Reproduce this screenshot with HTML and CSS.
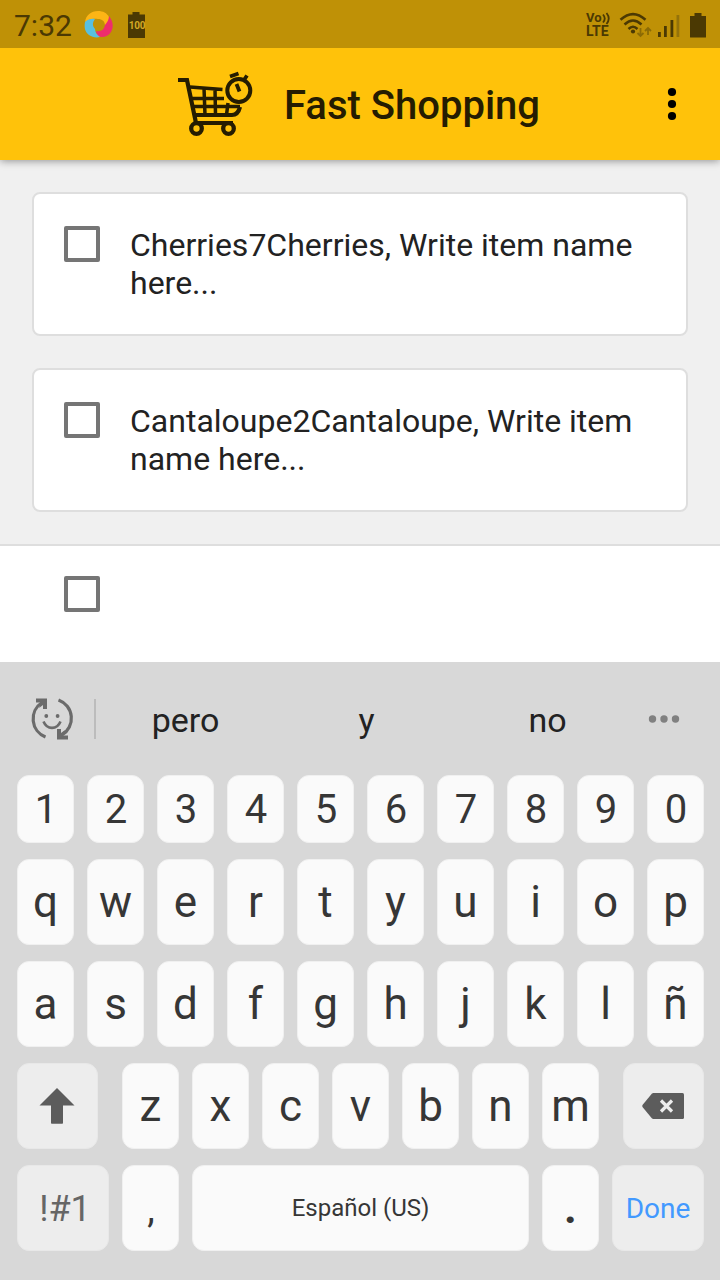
FILE: index.html
```html
<!DOCTYPE html>
<html lang="en">
<head>
<meta charset="utf-8">
<title>Fast Shopping</title>
<link rel="stylesheet" href="styles.css">
</head>
<body>
<div class="screen">
  <div class="status">
    <span class="clock">7:32</span>
    <svg class="swirl" width="30" height="30" viewBox="0 0 30 30">
      <path d="M1 12C2 5 7 1 14 1c5 0 9 2 11 6 0 4-1 6-4 9 0-5-3-7-7-7-4-1-9 0-13 3z" fill="#fdb515"/>
      <path d="M25 6c4 5 5 11 2 16-3 5-9 6-14 4l-1-5c5 1 8-1 9-6 2-3 4-5 4-9z" fill="#ee2d6b"/>
      <path d="M1 12c3-3 7-3.500 10-3-3 4-2.500 7 0 10 0 3 2 6 5 8-4 1-8 0-11-2C1 22 0 17.500 1 12z" fill="#58c0df"/>
    </svg>
    <span class="charge"><svg width="18" height="28" viewBox="0 0 18 28"><path d="M1 2.500h4.500V0h7v2.500H18V26H1z" fill="#4b3903"/></svg><b>100</b></span>
    <span class="volte"><span class="vo">Vo<svg width="9" height="13" viewBox="0 0 9 13" fill="none" stroke="#4b3903" stroke-width="1.800"><path d="M1 2.500q3.500 4 0 8M4.500 1q4.500 5.500 0 11"/></svg></span><span class="lte">LTE</span></span>
    <svg class="wifi" width="34" height="28" viewBox="0 0 34 28" fill="none" stroke="#4b3903" stroke-width="2.500">
      <path d="M1.500 7.800Q14-3.500 26.500 7.800M5.500 12.500Q14 4.500 22.500 12.500M9.500 17Q14 12.500 18.500 17"/>
      <circle cx="14" cy="19.500" r="2.100" fill="#4b3903" stroke="none"/>
      <path d="M21.500 16v8M18.500 21l3 3 3-3M29 23v-7M26 19l3-3 3 3" stroke="#8b6b05" stroke-width="1.800"/>
    </svg>
    <svg class="signal" width="22" height="24" viewBox="0 0 22 24" fill="#4b3903"><path d="M0 18h2.800v5H0zM6 12h2.800v11H6zM12.500 6h2.800v17h-2.800z"/><path d="M18.500 1h2.800v22h-2.800z" fill="#94720a"/></svg>
    <svg class="battery" width="16" height="25" viewBox="0 0 16 25"><path d="M0 3h4.500V0h7v3H16v21q0 .5-.5.500H.5Q0 24.500 0 24z" fill="#4b3903"/></svg>
  </div>
  <header class="bar">
    <svg class="cart" width="80" height="70" viewBox="0 0 80 70" fill="none" stroke="#251c01" stroke-width="3.500">
      <path d="M2 10H11L20 53H57" stroke-width="4.200"/>
      <path d="M14 17L46.500 19.500M16 28.500H48M18 36.500H64M28 18l1 27M39 19l.5 26M52 33l-1.500 12"/>
      <path d="M19 45H56Q62 45 64 37" stroke-width="4.200"/>
      <circle cx="20.500" cy="58.500" r="5.300" stroke-width="4.300"/>
      <circle cx="52.500" cy="58.500" r="5.300" stroke-width="4.300"/>
      <circle cx="62.800" cy="20.500" r="11.500" stroke-width="4"/>
      <path d="M60.500 14l3 7.500M54 6.500l8.500-3M68 10l3-4.500" stroke-width="3.800"/>
    </svg>
    <h1 class="title">Fast Shopping</h1>
    <svg class="more" width="10" height="34" viewBox="0 0 10 34"><circle cx="5" cy="5" r="4.100"/><circle cx="5" cy="17" r="4.100"/><circle cx="5" cy="29" r="4.100"/></svg>
  </header>
  <main class="list">
    <div class="card"><span class="check"></span><p class="item">Cherries7Cherries, Write item name here...</p></div>
    <div class="card"><span class="check"></span><p class="item">Cantaloupe2Cantaloupe, Write item name here...</p></div>
  </main>
  <div class="entry"><span class="check"></span></div>
  <div class="keyboard">
    <div class="suggest">
      <svg class="emoji" width="44" height="44" viewBox="0 0 44 44" fill="none" stroke="#6b6b6b" stroke-width="3.200">
        <path d="M15.500 40A19.500 19.500 0 0 1 12 5.500M28.500 3A19.500 19.500 0 0 1 32 38"/>
        <path d="M6 1.500h11v10.500h-4V8L9 11l2-5.500H6zM38 42.500H27V32h4v4l4-3-2 5.500h5z" fill="#6b6b6b" stroke="none"/>
        <path d="M13.500 24.500C17 33 27 33 30.500 24.500" stroke-width="2.600"/>
        <circle cx="16.300" cy="19" r="1.900" fill="#6b6b6b" stroke="none"/><circle cx="27.600" cy="19" r="1.900" fill="#6b6b6b" stroke="none"/>
      </svg>
      <span class="divider"></span>
      <span class="word">pero</span><span class="word">y</span><span class="word">no</span>
      <svg class="dots" width="32" height="10" viewBox="0 0 32 10" fill="#808080"><circle cx="4.500" cy="5" r="3.700"/><circle cx="16" cy="5" r="3.700"/><circle cx="27.500" cy="5" r="3.700"/></svg>
    </div>
    <div class="row digits"><span class="key">1</span><span class="key">2</span><span class="key">3</span><span class="key">4</span><span class="key">5</span><span class="key">6</span><span class="key">7</span><span class="key">8</span><span class="key">9</span><span class="key">0</span></div>
    <div class="row"><span class="key">q</span><span class="key">w</span><span class="key">e</span><span class="key">r</span><span class="key">t</span><span class="key">y</span><span class="key">u</span><span class="key">i</span><span class="key">o</span><span class="key">p</span></div>
    <div class="row"><span class="key">a</span><span class="key">s</span><span class="key">d</span><span class="key">f</span><span class="key">g</span><span class="key">h</span><span class="key">j</span><span class="key">k</span><span class="key">l</span><span class="key">ñ</span></div>
    <div class="row">
      <span class="key fn shift"><svg width="36" height="36" viewBox="0 0 36 36"><path d="M18 0L35.500 17.500H24V35q0 .8-.8.800H12.800q-.8 0-.8-.8V17.500H.5z" fill="#5c5c5c"/></svg></span>
      <span class="key">z</span><span class="key">x</span><span class="key">c</span><span class="key">v</span><span class="key">b</span><span class="key">n</span><span class="key">m</span>
      <span class="key fn erase"><svg width="42" height="26" viewBox="0 0 42 26"><path d="M11.500 0H40.500Q42 0 42 1.500v23Q42 26 40.500 26h-29Q10.500 26 9.800 25.200L.5 14Q0 13 .5 12L9.800.8Q10.500 0 11.500 0z" fill="#5c5c5c"/><path d="M19 7.500l11 11M30 7.500l-11 11" stroke="#ededed" stroke-width="3.200"/></svg></span>
    </div>
    <div class="row">
      <span class="key fn symbols">!#1</span><span class="key comma">,</span><span class="key space">Español (US)</span><span class="key period">.</span><span class="key fn done">Done</span>
    </div>
  </div>
</div>
</body>
</html>
```
FILE: styles.css
```css
* { box-sizing: border-box; }
body { margin: 0; font-family: Roboto, sans-serif; }
svg { display: block; flex: none; }
.screen { width: 720px; height: 1280px; display: flex; flex-direction: column; background: #fff; overflow: hidden; }
.status { position: relative; z-index: 2; height: 48px; flex: none; display: flex; align-items: flex-start; background: #bf9106; color: #4b3903; padding-left: 14px; }
.clock { width: 70px; font-size: 30px; line-height: 36px; padding-top: 8px; }
.swirl { margin-top: 10px; }
.charge { position: relative; margin: 12px 0 0 13px; width: 18px; }
.charge b { position: absolute; left: 1px; top: 8px; width: 18px; text-align: center; font-size: 10px; line-height: 12px; color: #d4a923; letter-spacing: -0.2px; }
.volte { display: flex; flex-direction: column; gap: 1px; margin: 12px 0 0 auto; width: 25px; white-space: nowrap; }
.vo { display: flex; align-items: center; font-size: 13px; line-height: 12px; height: 12px; font-weight: 700; }
.lte { font-size: 14px; line-height: 13px; height: 13px; font-weight: 700; }
.wifi { margin: 12px 0 0 8px; }
.signal { margin: 14px 0 0 5px; }
.battery { margin: 13px 14px 0 10px; }
.bar { position: relative; z-index: 1; height: 112px; flex: none; display: flex; align-items: center; background: #ffc20a; box-shadow: 0 1px 8px rgba(0,0,0,.4); padding: 0 43px 0 176px; }
.cart { margin-top: 2px; }
.title { margin: 4px 0 0 28px; font-size: 40px; line-height: 48px; font-weight: 500; color: #251c01; white-space: nowrap; }
.more { margin-left: auto; }
.list { height: 386px; flex: none; padding: 32px; display: flex; flex-direction: column; gap: 32px; background: #f0f0f0; border-bottom: 2px solid #dedede; }
.card { height: 144px; flex: none; display: flex; align-items: flex-start; gap: 30px; padding: 32px 30px; background: #fff; border: 2px solid #dedede; border-radius: 8px; }
.check { display: block; width: 36px; height: 36px; flex: none; border: 4px solid #757575; border-radius: 2px; }
.item { margin: 0; font-size: 32px; line-height: 38px; color: #222; }
.entry { height: 116px; flex: none; padding: 30px 64px; background: #fff; }
.keyboard { flex: 1; display: flex; flex-direction: column; gap: 16px; padding: 0 16px 0 17px; background: #d8d8d8; }
.suggest { height: 97px; flex: none; display: flex; align-items: center; padding: 16px 24px 0 13px; }
.divider { width: 2px; height: 40px; margin: 0 -1px 0 20px; background: #bcbcbc; }
.word { width: 181px; text-align: center; font-size: 34px; line-height: 40px; color: #222; margin-top: 3px; }
.dots { margin-left: auto; }
.row { height: 86px; flex: none; display: flex; gap: 13px; }
.digits { height: 68px; }
.key { width: 57px; flex: none; display: flex; align-items: center; justify-content: center; background: #fafafa; border: 1px solid #f0f0f0; border-radius: 12px; font-size: 44px; color: #363636; white-space: nowrap; }
.digits .key { font-size: 40px; padding: 1px 0 0 1px; }
.fn { background: #ededed; border-color: #e8e8e8; }
.shift, .erase { width: 81px; padding: 0 2px 0 0; }
.shift { margin-right: 11px; }
.erase { margin-left: 11px; }
.symbols { width: 92px; font-size: 36px; color: #666; padding: 1px 0 0 4px; }
.comma { font-size: 38px; padding: 1px 0 0 1px; }
.space { width: 337px; font-size: 24px; }
.period { font-weight: 700; }
.done { width: 92px; font-size: 28px; color: #4299ff; padding: 1px 0 0; }
```
